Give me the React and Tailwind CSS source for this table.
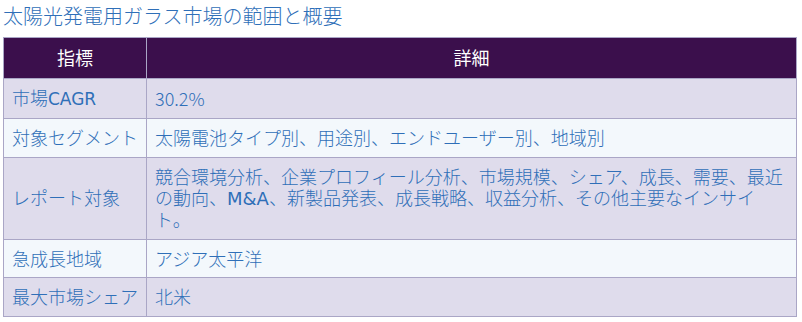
import React from "react";

const latin = { fontFamily: '"DejaVu Sans", "Noto Sans CJK JP", sans-serif' };

const rows = [
  [<>市場<span style={latin} className="text-[17px] font-normal leading-[21px]">CAGR</span></>, "30.2%"],
  ["対象セグメント", "太陽電池タイプ別、用途別、エンドユーザー別、地域別"],
  [
    "レポート対象",
    <>
      競合環境分析、企業プロフィール分析、市場規模、シェア、成長、需要、最近の動向、<span style={latin} className="font-normal leading-[21px]">M&amp;A</span>、新製品発表、成長戦略、収益分析、その他主要なインサイト。
    </>,
  ],
  ["急成長地域", "アジア太平洋"],
  ["最大市場シェア", "北米"],
];

export default function App() {
  return (
    <div
      className="w-[802px] h-[322px] bg-white overflow-hidden font-light"
      style={{ fontFamily: '"Noto Sans CJK JP", "Noto Sans", sans-serif' }}
    >
      <div className="pl-[3px] pt-[2px] text-[20px] leading-[28px] text-[#2f6fb8]">
        太陽光発電用ガラス市場の範囲と概要
      </div>
      <table className="ml-[3px] mt-[7px] w-[794px] border-collapse border border-[#aaa6c6] text-[18px] leading-[21.6px]">
        <thead>
          <tr className="bg-[#3b0f4c] text-white">
            <th className="h-[41px] px-2 font-normal text-center border border-[#aaa6c6] whitespace-nowrap">指標</th>
            <th className="h-[41px] px-2 font-normal text-center border border-[#aaa6c6]">詳細</th>
          </tr>
        </thead>
        <tbody>
          {rows.map(([k, v], i) => (
            <tr key={i} className={i % 2 === 0 ? "bg-[#dfdcec]" : "bg-[#f3f8fc]"}>
              <td className="pl-2 pr-2 py-2 align-middle text-left text-[#2f6fb8] border border-[#aaa6c6] whitespace-nowrap">{k}</td>
              <td className="pl-2 pr-[10px] py-2 align-middle text-left text-[#2f6fb8] border border-[#aaa6c6]">{v}</td>
            </tr>
          ))}
        </tbody>
      </table>
    </div>
  );
}
